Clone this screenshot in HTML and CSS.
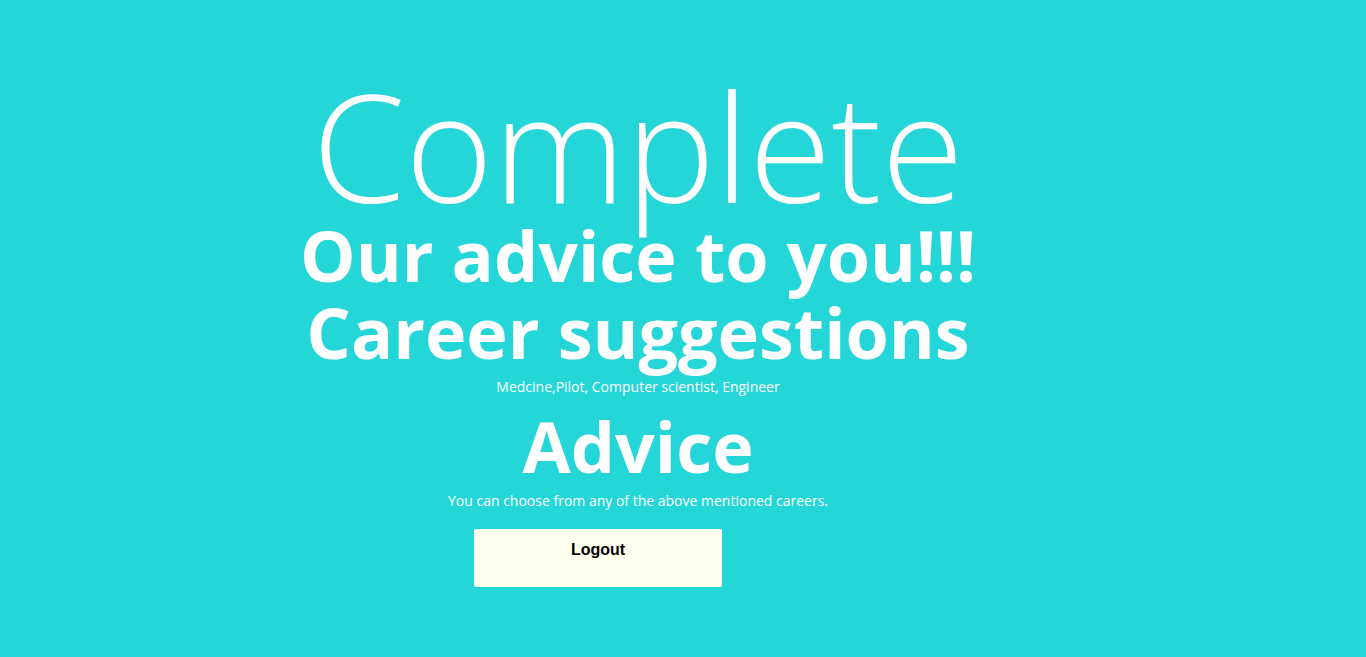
FILE: index.html
```html
<!DOCTYPE html>
<html>
<head>
<meta charset="utf-8">
<link rel="stylesheet" href="styles.css">
</head>
<body>
<main class="page">
  <h1 class="title">Complete</h1>
  <h2 class="big">Our advice to you!!!</h2>
  <h2 class="big">Career suggestions</h2>
  <p class="note">Medcine,Pilot, Computer scientist, Engineer</p>
  <h2 class="big advice">Advice</h2>
  <p class="note note2">You can choose from any of the above mentioned careers.</p>
  <div class="actions">
    <button class="logout">Logout</button>
  </div>
</main>
</body>
</html>
```
FILE: styles.css
```css
html, body {
  margin: 0;
  padding: 0;
  background: #25d6d9;
  height: 100%;
}
body {
  font-family: "Open Sans", "Liberation Sans", sans-serif;
  color: #fff;
}
.page {
  width: 1276px;
  text-align: center;
  padding-top: 73px;
}
.title {
  margin: 0;
  font-weight: 300;
  font-size: 150px;
  line-height: 144px;
}
.big {
  margin: 0;
  font-weight: 700;
  font-size: 70px;
  line-height: 77px;
}
.note {
  margin: 6px 0 0;
  font-size: 14px;
  line-height: 19px;
}
.advice {
  margin-top: 12px;
}
.actions {
  display: flex;
  padding-left: 474px;
  padding-top: 19px;
}
.logout {
  width: 248px;
  height: 58px;
  background: #fffff0;
  border: none;
  border-radius: 2px;
  font-family: "Liberation Sans", Arial, sans-serif;
  font-weight: 700;
  font-size: 16px;
  color: #000;
  display: flex;
  justify-content: center;
  align-items: flex-start;
  padding-top: 12px;
}
```
